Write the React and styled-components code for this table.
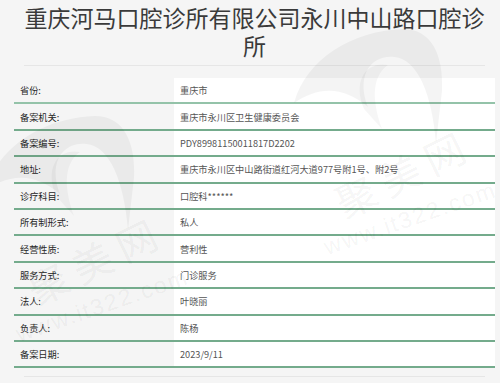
import styled, { createGlobalStyle } from "styled-components";

const GlobalStyle = createGlobalStyle`
  html, body {
    margin: 0;
    background: #f5f5f5;
  }
`;

// Page wrapper, the watermark overlay sits on top of it
const Page = styled.div`
  position: relative;
  overflow: hidden;
  height: 383px;
  padding: 3px 5px 0 14px;
  font-family: "Noto Sans CJK SC", "Noto Sans", sans-serif;
  box-sizing: border-box;
`;

const Title = styled.h1`
  margin: 0;
  font-size: 23px;
  line-height: 28px;
  font-weight: 400;
  color: #3a3a3a;
  text-align: center;
`;

const Divider = styled.div`
  height: 1px;
  margin: ${(p) => p.$top}px 10px 0;
  background: #e6e6e6;
`;

const Table = styled.div`
  margin-top: 12px;
`;

const Row = styled.div`
  display: grid;
  grid-template-columns: 160px 1fr;
  height: 26.4px;
  box-sizing: border-box;
  border-bottom: ${(p) => (p.$first ? "2px solid #94c3a9" : "2px solid #74ab8c")};
`;

const Cell = styled.div`
  display: flex;
  align-items: center;
  padding-left: 6px;
  font-size: 9.2px;
  white-space: nowrap;
`;

const Label = styled(Cell)`
  color: #262626;
`;

const Value = styled(Cell)`
  background: #fff;
  color: #555;
`;

// Faint site watermark (logo + name) laid over the content
const Mark = styled.div`
  position: absolute;
  left: ${(p) => p.$x}px;
  top: ${(p) => p.$y}px;
  width: 220px;
  height: 240px;
  pointer-events: none;
`;

const Tooth = styled.svg`
  position: absolute;
  left: 0;
  top: 0;
`;

const MarkName = styled.div`
  position: absolute;
  left: 40px;
  top: 118px;
  font-size: 40px;
  letter-spacing: 9px;
  color: rgba(0, 0, 0, 0.055);
  transform: rotate(-26deg);
  font-family: "Noto Sans CJK SC", sans-serif;
`;

const MarkUrl = styled.div`
  position: absolute;
  left: 30px;
  top: 180px;
  font-size: 23px;
  letter-spacing: 2px;
  color: rgba(0, 0, 0, 0.055);
  transform: rotate(-19deg);
  font-family: "Liberation Sans", sans-serif;
`;

const rows = [
  ["省份:", "重庆市"],
  ["备案机关:", "重庆市永川区卫生健康委员会"],
  ["备案编号:", "PDY89981150011817D2202"],
  ["地址:", "重庆市永川区中山路街道红河大道977号附1号、附2号"],
  ["诊疗科目:", "口腔科******"],
  ["所有制形式:", "私人"],
  ["经营性质:", "营利性"],
  ["服务方式:", "门诊服务"],
  ["法人:", "叶晓丽"],
  ["负责人:", "陈杨"],
  ["备案日期:", "2023/9/11"],
];

function Watermark({ x, y }) {
  return (
    <Mark $x={x} $y={y}>
      <Tooth width="170" height="130" viewBox="0 0 170 130">
        <path
          d="M4 78 C16 34 62 6 112 4 C140 3 154 28 152 66 L146 118 C142 70 128 34 104 32 C80 30 66 52 78 82 C52 60 28 62 4 78 Z"
          fill="rgba(0,0,0,0.045)"
        />
        <path
          d="M74 84 C62 56 76 36 98 40 C84 50 80 70 92 104 Z"
          fill="rgba(0,0,0,0.035)"
        />
      </Tooth>
      <MarkName>聚美网</MarkName>
      <MarkUrl>www.it322.com</MarkUrl>
    </Mark>
  );
}

export default function App() {
  return (
    <>
      <GlobalStyle />
      <Page>
        <Title>重庆河马口腔诊所有限公司永川中山路口腔诊所</Title>
        <Divider $top={6} />
        <Table>
          {rows.map(([label, value], i) => (
            <Row key={label} $first={i === 0}>
              <Label>{label}</Label>
              <Value>{value}</Value>
            </Row>
          ))}
        </Table>
        <Divider $top={8} />
        <Watermark x={290} y={25} />
        <Watermark x={-18} y={112} />
      </Page>
    </>
  );
}
